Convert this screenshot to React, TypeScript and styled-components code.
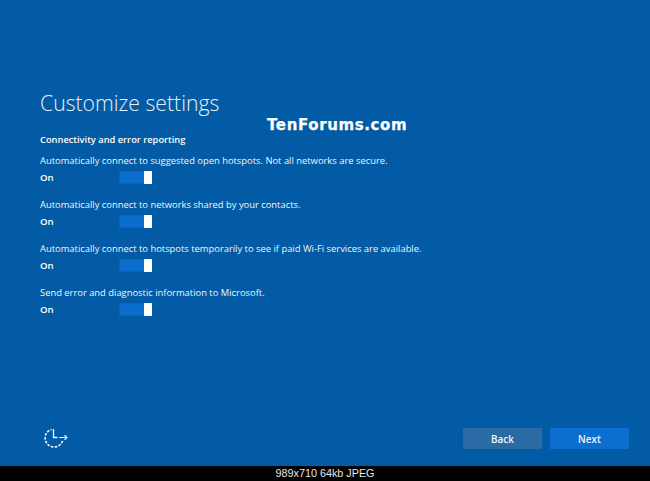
import React from "react";
import styled, { createGlobalStyle } from "styled-components";

const Global = createGlobalStyle`
  html, body { margin: 0; padding: 0; background: #000; }
  body { font-family: "Open Sans", "Noto Sans", sans-serif; }
`;

const Page = styled.div`
  width: 650px;
  height: 481px;
  display: flex;
  flex-direction: column;
  overflow: hidden;
`;

const Screen = styled.main`
  position: relative;
  height: 466px;
  background: #025ba4;
  color: #fff;
  padding: 91px 0 0 40px;
  box-sizing: border-box;
  display: flex;
  flex-direction: column;
`;

const Title = styled.h1`
  margin: 0;
  height: 24px;
  font-family: "Open Sans", sans-serif;
  font-weight: 300;
  font-size: 21.2px;
  line-height: 24px;
  color: #e8f1f8;
`;

const Subtitle = styled.h2`
  margin: 17px 0 0;
  height: 16px;
  font-size: 9.3px;
  font-weight: 600;
  line-height: 16px;
`;

const Settings = styled.div`
  margin-top: 5px;
  display: flex;
  flex-direction: column;
  gap: 8px;
`;

const Setting = styled.section`
  height: 36px;
  display: flex;
  flex-direction: column;
`;

const Description = styled.p`
  margin: 0;
  height: 16px;
  font-size: 9.4px;
  line-height: 16px;
  white-space: nowrap;
  color: #eef5fa;
`;

const ToggleRow = styled.div`
  margin-top: 1px;
  height: 15px;
  display: flex;
  align-items: center;
`;

const State = styled.span`
  width: 79px;
  font-size: 9.6px;
  font-weight: 600;
  line-height: 15px;
`;

const Toggle = styled.div`
  width: 33px;
  height: 13px;
  background: #0a6ccc;
  box-shadow: inset 0 0 0 1px #0566ba;
  display: flex;
  justify-content: flex-end;
`;

const Knob = styled.div`
  width: 8px;
  height: 13px;
  background: #fff;
`;

const Watermark = styled.div`
  position: absolute;
  left: 267px;
  top: 116px;
  font-family: "DejaVu Sans", sans-serif;
  font-weight: 700;
  font-size: 15px;
  line-height: 18px;
  letter-spacing: 0.62px;
  -webkit-text-stroke: 0.25px #fff;
  color: #fff;
  white-space: nowrap;
`;

const Bottom = styled.div`
  margin-top: auto;
  height: 66px;
  padding: 0 21px 0 4px;
  box-sizing: border-box;
  display: flex;
  align-items: flex-end;
  justify-content: space-between;
`;

const AccessIcon = styled.svg`
  width: 26px;
  height: 26px;
  margin-bottom: 14px;
  display: block;
`;

const Buttons = styled.div`
  display: flex;
  gap: 8px;
  margin-bottom: 17px;
`;

const Button = styled.button<{ $primary?: boolean }>`
  width: 79px;
  height: 21px;
  padding: 0;
  border: 0;
  font-family: "Open Sans", sans-serif;
  font-size: 9.9px;
  font-weight: 600;
  color: #f0f6fb;
  background: ${(p) => (p.$primary ? "#0a6fd0" : "#2a6ba6")};
`;

const Caption = styled.footer`
  height: 15px;
  background: #000;
  color: #e6e6e6;
  font-family: "Liberation Sans", Arial, sans-serif;
  font-size: 10.8px;
  line-height: 15px;
  text-align: center;
`;

const items = [
  "Automatically connect to suggested open hotspots. Not all networks are secure.",
  "Automatically connect to networks shared by your contacts.",
  "Automatically connect to hotspots temporarily to see if paid Wi-Fi services are available.",
  "Send error and diagnostic information to Microsoft.",
];

export default function App() {
  return (
    <Page>
      <Global />
      <Screen>
        <Title>Customize settings</Title>
        <Subtitle>Connectivity and error reporting</Subtitle>
        <Settings>
          {items.map((t) => (
            <Setting key={t}>
              <Description>{t}</Description>
              <ToggleRow>
                <State>On</State>
                <Toggle>
                  <Knob />
                </Toggle>
              </ToggleRow>
            </Setting>
          ))}
        </Settings>
        <Watermark>TenForums.com</Watermark>
        <Bottom>
          <AccessIcon viewBox="0 0 26 26" fill="none" stroke="#f2f7fb">
            <path
              d="M18.6 15 A9 9 0 1 1 7.5 3.4"
              strokeWidth="1.6"
              strokeDasharray="2.6 1.3"
            />
            <path d="M9.5 3 V11.5 H13.5" strokeWidth="1.3" />
            <path d="M15 11.5 H23 M20.6 9.2 L23 11.5 L20.6 13.8" strokeWidth="1.2" />
          </AccessIcon>
          <Buttons>
            <Button>Back</Button>
            <Button $primary>Next</Button>
          </Buttons>
        </Bottom>
      </Screen>
      <Caption>989x710 64kb JPEG</Caption>
    </Page>
  );
}
